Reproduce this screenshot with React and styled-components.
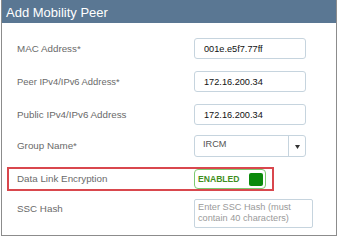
import React from "react";
import styled, { createGlobalStyle, css } from "styled-components";

const GlobalStyle = createGlobalStyle`
  body {
    margin: 0;
    background: #fff;
    font-family: "Liberation Sans", Arial, sans-serif;
  }
`;

const Panel = styled.div`
  width: 334px;
  height: 235px;
  margin-left: 1px;
  border: 1px solid #8c8c8c;
  border-top: none;
`;

const Header = styled.div`
  height: 23px;
  box-sizing: border-box;
  padding: 2px 0 0 4px;
  line-height: 21px;
  background: #5a7793;
  color: #fff;
  font-size: 13px;
`;

const Body = styled.div`
  padding: 15px 0 0 15px;
`;

const highlighted = css`
  width: fit-content;
  margin-left: -10px;
  padding: 0 6px 0 8px;
  border: 2px solid #d9474d;
`;

const Row = styled.div`
  display: flex;
  align-items: ${p => p.$align || "center"};
  margin-top: ${p => p.$top || 0}px;
  ${p => p.$highlight && highlighted}
`;

const Label = styled.div`
  width: 177px;
  flex-shrink: 0;
  font-size: ${p => p.$size || 9.8}px;
  line-height: 12px;
  color: #6a6a6a;
  padding-top: ${p => p.$pad || 0}px;
`;

const TextInput = styled.input`
  width: 112px;
  height: 21px;
  box-sizing: border-box;
  margin: 0;
  padding: 0 9px;
  border: 1px solid #c6d4de;
  border-radius: 3px;
  font-family: "Liberation Sans", Arial, sans-serif;
  font-size: 9.2px;
  color: #111;
  outline: none;
`;

const Select = styled.div`
  width: 112px;
  height: 22px;
  box-sizing: border-box;
  display: flex;
  border: 1px solid #c6d4de;
  border-radius: 3px;
`;

const SelectValue = styled.div`
  flex: 1;
  padding: 3px 0 0 8px;
  font-size: 9.2px;
  color: #555;
`;

const Caret = styled.div`
  width: 16px;
  display: flex;
  align-items: center;
  justify-content: center;
  padding-top: 2px;
  border-left: 1px solid #c6d4de;
`;

const Toggle = styled.div`
  width: 72px;
  height: 20px;
  box-sizing: border-box;
  display: flex;
  align-items: center;
  justify-content: space-between;
  padding: 0 2px 0 3px;
  border: 1.5px solid #7cc96f;
  border-radius: 4px;
`;

const ToggleText = styled.span`
  font-size: 8.6px;
  font-weight: bold;
  color: #3f8f1e;
`;

const Knob = styled.span`
  width: 14px;
  height: 13px;
  border-radius: 2px;
  background: #0b8a0b;
`;

const HashBox = styled.textarea`
  width: 119px;
  height: 29px;
  box-sizing: border-box;
  margin: 0;
  padding: 2px 3px;
  border: 1px solid #c6d4de;
  border-radius: 2px;
  resize: none;
  overflow: hidden;
  font-family: "Liberation Sans", Arial, sans-serif;
  font-size: 9.2px;
  line-height: 11px;
  outline: none;
  &::placeholder {
    color: #9a9a9a;
  }
`;

export default function App() {
  return (
    <>
      <GlobalStyle />
      <Panel>
        <Header>Add Mobility Peer</Header>
        <Body>
          <Row>
            <Label>MAC Address*</Label>
            <TextInput readOnly defaultValue="001e.e5f7.77ff" />
          </Row>
          <Row $top={12}>
            <Label $size={9.4}>Peer IPv4/IPv6 Address*</Label>
            <TextInput readOnly defaultValue="172.16.200.34" />
          </Row>
          <Row $top={12}>
            <Label>Public IPv4/IPv6 Address</Label>
            <TextInput readOnly defaultValue="172.16.200.34" />
          </Row>
          <Row $top={10}>
            <Label>Group Name*</Label>
            <Select>
              <SelectValue>IRCM</SelectValue>
              <Caret>
                <svg width="5" height="4" viewBox="0 0 5 4">
                  <path d="M0 0h5L2.5 4z" fill="#333" />
                </svg>
              </Caret>
            </Select>
          </Row>
          <Row $top={10} $highlight>
            <Label>Data Link Encryption</Label>
            <Toggle>
              <ToggleText>ENABLED</ToggleText>
              <Knob />
            </Toggle>
          </Row>
          <Row $top={8} $align="flex-start">
            <Label $pad={4}>SSC Hash</Label>
            <HashBox readOnly placeholder="Enter SSC Hash (must contain 40 characters)" />
          </Row>
        </Body>
      </Panel>
    </>
  );
}
